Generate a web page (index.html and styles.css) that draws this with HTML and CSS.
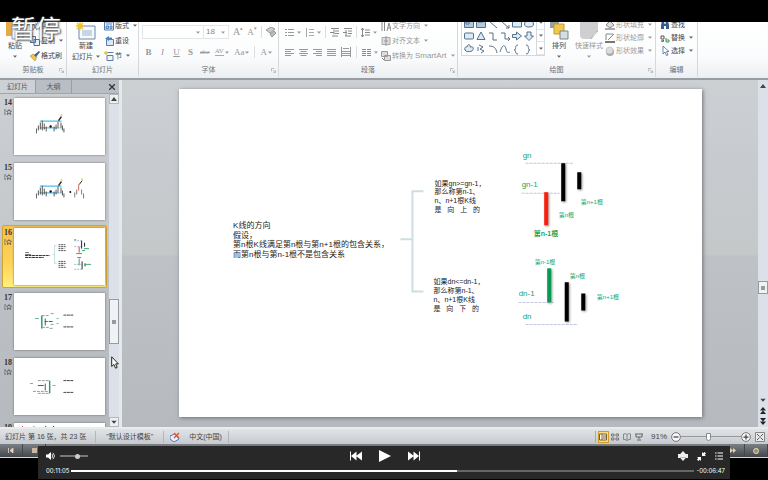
FILE: index.html
```html
<!DOCTYPE html>
<html lang="zh-CN">
<head>
<meta charset="utf-8">
<title>幻灯片</title>
<link rel="stylesheet" href="styles.css">
</head>
<body>
<svg class="sprite" aria-hidden="true">
  <symbol id="down" viewBox="0 0 4 3"><path d="M0 .5h4L2 2.8z" fill="currentColor"/></symbol>
  <symbol id="up" viewBox="0 0 6 4"><path d="M0 4h6L3 0z" fill="currentColor"/></symbol>
  <symbol id="launcher" viewBox="0 0 6 6"><path d="M.5 4V.5H4M2.5 2.5l2.5 2.5M5.5 3v2.5H3" fill="none" stroke="currentColor"/></symbol>
  <symbol id="lines" viewBox="0 0 9 9"><path d="M0 1.5h9M0 3.5h6M0 5.5h9M0 7.5h6" stroke="currentColor"/></symbol>
  <symbol id="linesC" viewBox="0 0 9 9"><path d="M0 1.5h9M1.5 3.5h6M0 5.5h9M1.5 7.5h6" stroke="currentColor"/></symbol>
  <symbol id="linesR" viewBox="0 0 9 9"><path d="M0 1.5h9M3 3.5h6M0 5.5h9M3 7.5h6" stroke="currentColor"/></symbol>
  <symbol id="linesJ" viewBox="0 0 9 9"><path d="M0 1.5h9M0 3.5h9M0 5.5h9M0 7.5h9" stroke="currentColor"/></symbol>
  <symbol id="star" viewBox="0 0 8 6"><path d="M0 1h2M0 3h1.500M0 5h2M5 .5l.8 1.500h1.700L6.200 3.500l.6 2L5 4.400l-1.800 1.100.6-2L2.500 2h1.700z" fill="none" stroke="#555" stroke-width=".8"/></symbol>
  <symbol id="candles" viewBox="0 0 34 22">
    <path d="M4 7.500h22M4 14.500h20" stroke="#4fbde6" stroke-width="1.300"/>
    <path d="M.5 15v5M2.500 12v5M4.500 9v7M6.500 7v10M8.500 10v6M10.500 13v5M18.500 13v5M20.500 11v5M22.500 8v6M25.500 9v6M27 12v5M28.500 15v4" stroke="#555"/>
    <path d="M23 7l3-4" stroke="#222" stroke-width="1.500"/><circle cx="15" cy="13" r="1.200" fill="#111"/><circle cx="26" cy="1.500" r="1" fill="#e8cf58"/>
  </symbol>
</svg>

<div class="letterbox"></div>

<header class="ribbon">
  <section class="group clipboard">
    <div class="tools">
      <button class="big"><svg width="20" height="20" viewBox="0 0 20 20"><path d="M1 0h13v16H1z" fill="#e5a94a"/><path d="M7 5h11v14H7z" fill="#f5f7fa" stroke="#8796ab"/></svg><span>粘贴</span><svg class="arrow"><use href="#down"/></svg></button>
      <div class="stack">
        <button><svg width="10" height="10" viewBox="0 0 10 10"><path d="M2 1l5 8M8 1L3 9" stroke="#5978a8"/></svg>剪切</button>
        <button><svg width="10" height="10" viewBox="0 0 10 10"><path d="M.5.500h5v6h-5zM4 3.500h5.500v6H4z" fill="#e8f0fa" stroke="#4671a8"/></svg>复制<svg class="arrow"><use href="#down"/></svg></button>
        <button><svg width="10" height="10" viewBox="0 0 10 10"><path d="M0 5l3-2 4 3-2 4z" fill="#eec64d" stroke="#a9822b" stroke-width=".5"/><path d="M4 4l5-4 1 1-4 5z" fill="#435f8e"/></svg>格式刷</button>
      </div>
    </div>
    <div class="caption">剪贴板<svg><use href="#launcher"/></svg></div>
  </section>

  <section class="group slides">
    <div class="tools">
      <button class="big"><svg width="20" height="18" viewBox="0 0 20 18"><path d="M3 4h16v13H3z" fill="#f7fafd" stroke="#7188a8"/><path d="M6 8h10v6H6z" fill="#c7d5e5"/><path d="M4 0v8M0 4h8M1 1l6 6M7 1L1 7" stroke="#f0c332" stroke-width="1.500"/></svg><span>新建</span><span>幻灯片<svg class="arrow"><use href="#down"/></svg></span></button>
      <div class="stack">
        <button><svg width="10" height="10" viewBox="0 0 10 10"><path d="M.5 1h9v8h-9z" fill="#eef4fa" stroke="#5a7da8"/><path d="M2 3h6M2 5h2.500v2.500H2zM6 5h2v2.500H6z" stroke="#5a8cc5" fill="#9fc0e4"/></svg>版式<svg class="arrow"><use href="#down"/></svg></button>
        <button><svg width="10" height="10" viewBox="0 0 10 10"><path d="M2.500 3.500h7v6h-7z" fill="#dce8f6" stroke="#5a7da8"/><path d="M5 0L1 2.500 5 5V3.500h3V1.500H5z" fill="#4c86cb"/></svg>重设</button>
        <button><svg width="10" height="10" viewBox="0 0 10 10"><path d="M3 1.500h6.500M3 4.500h6v5H3z" fill="#eef4fa" stroke="#5a7da8"/><path d="M2 0v4M0 2h4" stroke="#eec03a" stroke-width="1.500"/></svg>节<svg class="arrow"><use href="#down"/></svg></button>
      </div>
    </div>
    <div class="caption">幻灯片</div>
  </section>

  <section class="group font">
    <div class="tools rows dim">
      <div class="row">
        <label class="combo family"><select aria-label="字体"><option></option></select><svg class="arrow"><use href="#down"/></svg></label>
        <label class="combo size"><select aria-label="字号"><option>18</option></select><svg class="arrow"><use href="#down"/></svg></label>
        <button class="serif grow">A<sup>▴</sup></button><button class="serif shrink">A<sup>▾</sup></button>
        <i class="sep"></i>
        <button aria-label="清除格式"><svg width="10" height="10" viewBox="0 0 10 10"><path d="M0 3l5-3 4 2-5 4z" fill="#ccc" stroke="#999"/><path d="M4 7l4-3 2 2-4 4z" fill="#bbb" stroke="#999"/></svg></button>
      </div>
      <div class="row letters">
        <button><b>B</b></button><button><em>I</em></button><button><u>U</u></button><button><b>S</b></button><button class="strike"><s>abe</s></button>
        <button class="track"><span>AV</span><svg class="arrow"><use href="#down"/></svg></button>
        <button>Aa<svg class="arrow"><use href="#down"/></svg></button>
        <i class="sep"></i>
        <button>A<svg class="arrow"><use href="#down"/></svg></button>
      </div>
    </div>
    <div class="caption">字体<svg><use href="#launcher"/></svg></div>
  </section>

  <section class="group paragraph">
    <div class="tools dim">
      <div class="rows">
        <div class="row">
          <button aria-label="项目符号"><svg width="9" height="9" viewBox="0 0 9 9"><path d="M0 1.500h2M0 4.500h2M0 7.500h2M3 1.500h6M3 4.500h6M3 7.500h6" stroke="#999"/></svg><svg class="arrow"><use href="#down"/></svg></button>
          <button aria-label="编号"><svg width="9" height="9" viewBox="0 0 9 9"><path d="M1.500 0v9M4 1.500h5M4 4.500h5M4 7.500h5" stroke="#aaa"/></svg><svg class="arrow"><use href="#down"/></svg></button>
          <i class="sep"></i>
          <button aria-label="减少缩进"><svg width="9" height="9" viewBox="0 0 9 9"><path d="M1 .5h8M5 3h4M5 5.500h4M2 8h6M4 1.500v5M0 4.500h4" stroke="#888"/></svg></button>
          <button aria-label="增加缩进"><svg width="9" height="9" viewBox="0 0 9 9"><path d="M1 .5h8M5 3h4M5 5.500h4M2 8h6M3 2v6M0 4.500h4" stroke="#888"/></svg></button>
          <i class="sep"></i>
          <button aria-label="行距"><svg width="9" height="9" viewBox="0 0 9 9"><path d="M1.500 0v9M0 2l1.500-2L3 2M0 7l1.500 2L3 7M4 2h5M4 4.500h5M4 7h5" stroke="#888" fill="none"/></svg><svg class="arrow"><use href="#down"/></svg></button>
        </div>
        <div class="row aligns">
          <button aria-label="左对齐"><svg width="9" height="9"><use href="#lines"/></svg></button>
          <button aria-label="居中"><svg width="9" height="9"><use href="#linesC"/></svg></button>
          <button aria-label="右对齐"><svg width="9" height="9"><use href="#linesR"/></svg></button>
          <button aria-label="两端对齐"><svg width="9" height="9"><use href="#linesJ"/></svg></button>
          <button aria-label="分散对齐"><svg width="10" height="10" viewBox="0 0 10 10"><path d="M.5 0v10M9.500 0v10M2 1.500h6M1 4.500h8M1 6.500h8M1 8.500h8" stroke="#999"/></svg></button>
          <i class="sep"></i>
          <button aria-label="分栏"><svg width="9" height="9" viewBox="0 0 9 9"><path d="M0 1.500h4M0 3.500h4M0 5.500h4M0 7.500h4M5 1.500h4M5 3.500h4M5 5.500h4M5 7.500h4" stroke="#888"/></svg><svg class="arrow"><use href="#down"/></svg></button>
        </div>
      </div>
      <div class="stack">
        <button><svg width="10" height="10" viewBox="0 0 10 10"><path d="M1 0v10M3.500 0v10M6 10l2-8 2 8M6.500 7h3" stroke="#888" fill="none"/></svg>文字方向<svg class="arrow"><use href="#down"/></svg></button>
        <button><svg width="10" height="10" viewBox="0 0 10 10"><path d="M1 1.500h8v7H1z" fill="#ddd" stroke="#aaa"/><path d="M5 0v10M3 5h4" stroke="#999"/></svg>对齐文本<svg class="arrow"><use href="#down"/></svg></button>
        <button><svg width="10" height="10" viewBox="0 0 10 10"><path d="M.5.500h6v5h-6zM3.500 4.500h6v5h-6z" fill="#ddd" stroke="#999"/><path d="M1 7l2 2" stroke="#888"/></svg><span>转换为 <span class="latin">SmartArt</span></span><svg class="arrow"><use href="#down"/></svg></button>
      </div>
    </div>
    <div class="caption">段落<svg><use href="#launcher"/></svg></div>
  </section>

  <section class="group drawing">
    <div class="tools">
      <div class="gallery">
        <svg width="74" height="38" viewBox="0 0 74 38" fill="none" stroke="#55708c" stroke-width="1">
          <g fill="#dcebf5">
            <path d="M2.500 3.500h9v7h-9zM14.500 3.500h9v7h-9z" fill="#b3c9dd"/><path d="M4 5h3v2H4zM16 5h5" />
            <path d="M50.500 4h9v6h-9z"/><ellipse cx="67" cy="7" rx="4.500" ry="3"/>
            <rect x="2.500" y="16" width="9" height="6" rx="1"/><path d="M19 15l4 7.500h-8z"/>
            <path d="M50.500 17.500h4V15l5 4-5 4v-2.500h-4zM65 15h4v4h2.500L67 23.500 62.500 19H65z"/>
            <path d="M3 33c-1-3 1-3 2-3 0-3 4-3 3 0 4-1 4 2 2 4-3 1-6 1-7-1z"/>
          </g>
          <path d="M27 4l8 7M39 4l8 7M47 8v3h-3M27 16h4v7h4M39 16h4v6h5M46 20l2 2-2 2M17 28l4 2-3 2 4 2-3 2M16 30v4M27 29c5 0 7 2 8 7M38 35c3-9 5-7 6-3s2 4 4 3M56 28c-4 0-1 5-4 5 3 0 0 4 4 4M64 28c4 0 1 5 4 5-3 0 0 4-4 4"/>
        </svg>
        <div class="steps"><button aria-label="上一行"><svg class="arrow"><use href="#down"/></svg></button><button aria-label="下一行"><svg class="arrow"><use href="#down"/></svg></button><button aria-label="更多形状"><svg class="arrow"><use href="#down"/></svg></button></div>
      </div>
      <button class="big"><svg width="20" height="18" viewBox="0 0 20 18"><path d="M1 0h9v6H1z" fill="#999fa6"/><path d="M5 2h10v10H5z" fill="#f0c84e" stroke="#c39b32"/><path d="M11 9h8v8h-8z" fill="#d8dde2" stroke="#7b838c"/></svg><span>排列</span><svg class="arrow"><use href="#down"/></svg></button>
      <button class="big dim"><svg width="20" height="18" viewBox="0 0 20 18"><path d="M1 0h18v9l-7 8H5q-4 0-4-4z" fill="#cfcfd2"/><path d="M12 17c2-2 0-6 7-8z" fill="#ececee" stroke="#aaa" stroke-width=".6"/></svg><span>快速样式</span><svg class="arrow"><use href="#down"/></svg></button>
      <div class="stack tight dim">
        <button><svg width="10" height="10" viewBox="0 0 10 10"><path d="M1 5l4-4 4 4-4 3z" fill="#ddd" stroke="#888"/><path d="M0 9h10" stroke="#aaa" stroke-width="2"/></svg>形状填充<svg class="arrow"><use href="#down"/></svg></button>
        <button><svg width="10" height="10" viewBox="0 0 10 10"><path d="M1 1h7M1 1v6M3 7l6-6" stroke="#888" fill="none"/><path d="M0 9h10" stroke="#777" stroke-width="2"/></svg>形状轮廓<svg class="arrow"><use href="#down"/></svg></button>
        <button><svg width="10" height="10" viewBox="0 0 10 10"><circle cx="5" cy="6" r="4" fill="#aaa"/><circle cx="4.500" cy="4.500" r="3.500" fill="#ddd" stroke="#aaa" stroke-width=".5"/></svg>形状效果<svg class="arrow"><use href="#down"/></svg></button>
      </div>
    </div>
    <div class="caption">绘图<svg><use href="#launcher"/></svg></div>
  </section>

  <section class="group editing">
    <div class="tools">
      <div class="stack tight">
        <button><svg width="10" height="10" viewBox="0 0 10 10"><path d="M1 9V5l1-4h2l.5 3h1L6 1h2l1 4v4H6V6H4v3z" fill="#3a5a91"/></svg>查找</button>
        <button><svg width="10" height="10" viewBox="0 0 10 10"><path d="M1 3h3v3H1zM1 8h3l-1-1M3 8L2 9" stroke="#555" fill="none"/><path d="M6 5v4M6 7h3v2H6" stroke="#3a9b55" fill="none"/></svg>替换<svg class="arrow"><use href="#down"/></svg></button>
        <button><svg width="10" height="10" viewBox="0 0 10 10"><path d="M3 0v8l2-2 1.500 3.500L8 9 6.500 5.500H9z" fill="#fff" stroke="#4d6b98" stroke-width=".8"/></svg>选择<svg class="arrow"><use href="#down"/></svg></button>
      </div>
    </div>
    <div class="caption">编辑</div>
  </section>
</header>

<main class="workspace">
  <aside class="sidebar">
    <nav class="tabs"><button class="tab active">幻灯片</button><button class="tab">大纲</button><button class="close" aria-label="关闭"><svg width="6" height="6" viewBox="0 0 6 6"><path d="M0 0l6 6M6 0L0 6" stroke="#333" stroke-width="1.300"/></svg></button></nav>
    <div class="panel">
      <ol class="thumbs">
        <li><div class="num">14<svg><use href="#star"/></svg></div>
          <svg class="thumb" viewBox="0 0 92 58"><use href="#candles" x="22" y="16" width="34" height="22"/></svg></li>
        <li><div class="num">15<svg><use href="#star"/></svg></div>
          <svg class="thumb" viewBox="0 0 92 58"><use href="#candles" x="22" y="16" width="34" height="22"/><path d="M61.500 30v5M63.500 27v5M68.500 27v5M70.500 31v5" stroke="#777"/><path d="M65.500 22v6" stroke="#d8604c"/><path d="M66 22l3-4" stroke="#222"/><circle cx="69" cy="16.500" r="1" fill="#e8cf58"/><circle cx="57" cy="29.500" r="1" fill="#111"/></svg></li>
        <li class="selected"><div class="num">16<svg><use href="#star"/></svg></div>
          <svg class="thumb" viewBox="0 0 92 58"><path d="M11 25h4M11 27h6" stroke="#777"/><path d="M11 28h25M11 30h19" stroke="#333" stroke-dasharray="3 .5"/><path d="M43 18h-2v18h2M39 27h2" stroke="#c3dbe0" fill="none"/><path d="M45 17h7M45 19h8M45 21h6M45 23h8M45 34h7M45 36h8M45 38h6M45 40h8" stroke="#555" stroke-dasharray="2 .6"/><path d="M61 13h9M61 19h7M61 37h7M61 42h9" stroke="#a9b6d4" stroke-dasharray="2 1"/><path d="M68.500 13v8M71.500 15v4M69 34v8M72 36v3" stroke="#222"/><path d="M66 19v6" stroke="#e0402c"/><path d="M66 31v7M61 12h2M71 21h5M63 26h6M64 30h4M73 37h5M69 23h3" stroke="#35a76f"/></svg></li>
        <li><div class="num">17<svg><use href="#star"/></svg></div>
          <svg class="thumb" viewBox="0 0 92 58"><path d="M28 23v13" stroke="#2f9d68" stroke-width="1.500"/><path d="M21 26h4M37 32h3M43 26h2" stroke="#69b993"/><path d="M28 23h8M37 21h3M28 35h8M36 36h4M43 31h2" stroke="#999" stroke-dasharray="3 1"/><path d="M31.500 26v7M31 29h3M35 29h4" stroke="#555"/><path d="M50 22.500h10M50 34.500h10" stroke="#444" stroke-dasharray="3 .5"/></svg></li>
        <li><div class="num">18<svg><use href="#star"/></svg></div>
          <svg class="thumb" viewBox="0 0 92 58"><path d="M36 23v13" stroke="#2f9d68" stroke-width="1.500"/><path d="M39 28h3" stroke="#69b993"/><path d="M24 23h11M16 26h3M19 34h16M24 36h11" stroke="#999" stroke-dasharray="3 1"/><path d="M31.500 26v7M24 28h6" stroke="#555"/><path d="M50 23h10M50 35h10" stroke="#444" stroke-dasharray="3 .5"/></svg></li>
        <li><div class="num">19<svg><use href="#star"/></svg></div>
          <svg class="thumb" viewBox="0 0 92 58"><path d="M8 3l2 3M40 4l3 2" stroke="#c65b55"/><path d="M20 3v4M22 5v3" stroke="#48a97b"/><path d="M32 3v3M40 3v4" stroke="#444"/></svg></li>
      </ol>
      <div class="scroll"><button aria-label="向上"><svg width="6" height="4"><use href="#up"/></svg></button><span class="grip"></span><button aria-label="向下"><svg width="6" height="4"><use href="#down"/></svg></button></div>
    </div>
    <svg class="cursor" width="8" height="13" viewBox="0 0 8 13"><path d="M.7.800v9.700l2.200-2 1.600 3.700 1.700-.8-1.600-3.500h2.800z" fill="#fff" stroke="#222"/></svg>
  </aside>

  <section class="canvas">
    <svg class="slide" viewBox="0 0 522 327">
      <g class="bracket"><path d="M244 102h-11v100h11M221 150h12"/></g>
      <g class="body"><text x="54" y="139">K线的方向</text><text x="54" y="149">假设，</text><text x="54" y="158">第n根K线满足第n根与第n+1根的包含关系，</text><text x="54" y="168">而第n根与第n-1根不是包含关系</text></g>
      <g class="note"><text x="255" y="97">如果gn&gt;=gn-1，</text><text x="255" y="105">那么称第n-1、</text><text x="255" y="114">n、n+1根K线</text><text x="255" y="123">是&#160;&#160;&#160;向&#160;&#160;&#160;上&#160;&#160;&#160;的</text></g>
      <g class="note"><text x="254" y="195">如果dn&lt;=dn-1，</text><text x="254" y="204">那么称第n-1、</text><text x="254" y="213">n、n+1根K线</text><text x="254" y="222">是&#160;&#160;&#160;向&#160;&#160;&#160;下&#160;&#160;&#160;的</text></g>
      <path class="level" d="M346 74h47M342 104h38M339 213h36M346 235h51"/>
      <g class="bars">
        <path d="M383.500 74v38M399.500 83v17M387 193v39M403.500 204v17" stroke="#000"/>
        <path d="M366.500 103v33" stroke="#fb1f0d"/><path d="M369.500 179v34" stroke="#079a55"/>
      </g>
      <g class="level-name"><text x="343" y="69">gn</text><text x="342" y="98">gn-1</text><text x="339" y="207">dn-1</text><text x="343" y="230">dn</text></g>
      <g class="bar-name"><text x="401" y="115">第n+1根</text><text x="379" y="128">第n根</text><text x="354" y="147" class="strong">第n-1根</text><text x="355" y="175">第n-1根</text><text x="390" y="189">第n根</text><text x="417" y="210">第n+1根</text></g>
    </svg>
  </section>

  <div class="scroll page-scroll"><button aria-label="向上"><svg width="6" height="4"><use href="#up"/></svg></button><span class="grip"></span><button aria-label="向下"><svg width="6" height="4"><use href="#down"/></svg></button><button aria-label="上一张"><svg width="6" height="7" viewBox="0 0 6 7"><path d="M0 3.500L3 0l3 3.500zM0 7l3-3.500L6 7z" fill="#222"/></svg></button><button aria-label="下一张"><svg width="6" height="7" viewBox="0 0 6 7"><path d="M0 0h6L3 3.500zM0 3.500h6L3 7z" fill="#222"/></svg></button></div>
</main>

<footer class="status">
  <span class="cell">幻灯片 第 16 张，共 23 张</span>
  <span class="cell theme">"默认设计模板"</span>
  <span class="cell lang"><svg width="10" height="10" viewBox="0 0 10 10"><path d="M0 4l5-2 4 5-5 3-4-3z" fill="#e9f0fa" stroke="#5077ba"/><path d="M4 1l5 5M9 1L4 6" stroke="#e2572f" stroke-width="1.500"/></svg>中文(中国)</span>
  <div class="views">
    <button class="on" aria-label="普通视图"><svg width="8" height="8" viewBox="0 0 8 8"><path d="M.5 1h7v6h-7zM3 1v6M4 3h3M4 5h3" fill="#fff" stroke="#716034"/></svg></button>
    <button aria-label="浏览视图"><svg width="8" height="8" viewBox="0 0 8 8"><path d="M.5 1h2.500v2H.5zM5 1h2.500v2H5zM.5 5H3v2H.5zM5 5h2.500v2H5z" fill="none" stroke="#777"/></svg></button>
    <button aria-label="阅读视图"><svg width="8" height="8" viewBox="0 0 8 8"><path d="M4 1.500Q2 0 .5 1v5.500Q2 6 4 7.500 6 6 7.500 6.500V1Q6 0 4 1.500v6" fill="none" stroke="#888"/></svg></button>
    <button aria-label="放映"><svg width="8" height="8" viewBox="0 0 8 8"><path d="M0 1h8M1 1v3h6V1M4 4v2M2 7h4" fill="none" stroke="#666"/></svg></button>
  </div>
  <span class="percent">91%</span>
  <button class="round" aria-label="缩小"><svg width="10" height="10" viewBox="0 0 8 8"><circle cx="4" cy="4" r="3.500" fill="#f8f8f8" stroke="#777" stroke-width=".8"/><path d="M2 4h4" stroke="#444"/></svg></button>
  <input class="zoom" type="range" min="0" max="100" value="46" aria-label="显示比例">
  <button class="round" aria-label="放大"><svg width="10" height="10" viewBox="0 0 8 8"><circle cx="4" cy="4" r="3.500" fill="#f8f8f8" stroke="#777" stroke-width=".8"/><path d="M2 4h4M4 2v4" stroke="#444"/></svg></button>
  <button class="fit" aria-label="适应窗口"><svg width="10" height="10" viewBox="0 0 10 10"><path d="M.5.500h9v9h-9z" fill="#e8eaec" stroke="#888"/><path d="M2 2l2 2M8 2L6 4M2 8l2-2M8 8L6 6M4 5h2" stroke="#555"/></svg></button>
</footer>

<div class="under">
  <button aria-label="开头"><svg width="6" height="5" viewBox="0 0 6 5"><path d="M.5 0v5M5 0v5L2 2.500z" fill="#e3d5c3" stroke="#e3d5c3" stroke-width=".8"/></svg></button>
  <button aria-label="停止"><svg width="5" height="5"><rect width="5" height="5" fill="#c9b9a4"/></svg></button>
  <i></i>
  <button aria-label="快进"><svg width="6" height="5" viewBox="0 0 6 5"><path d="M0 0v5l3-2.500zM3 0v5l3-2.500z" fill="#e3d5a9"/></svg></button>
  <button aria-label="设置"><svg width="6" height="6" viewBox="0 0 6 6"><circle cx="3" cy="3" r="2.300" fill="none" stroke="#e3d5a9" stroke-width="1.200"/><circle cx="3" cy="3" r=".8" fill="#e3d5a9"/></svg></button>
</div>

<div class="toast">暂停</div>

<div class="player">
  <div class="controls">
    <div class="side">
      <button aria-label="音量"><svg width="9" height="8" viewBox="0 0 9 8"><path d="M0 2.500h2L5 0v8L2 5.500H0z" fill="#fff"/><path d="M6 2q1.500 2 0 4M7 .8q3 3.200 0 6.400" fill="none" stroke="#fff" stroke-width=".8"/></svg></button>
      <input class="volume" type="range" min="0" max="100" value="66" aria-label="音量大小">
    </div>
    <div class="transport">
      <button aria-label="上一个"><svg width="12" height="10" viewBox="0 0 12 10"><path d="M0 .5h1v9H0zM6.500.500v9L1 5zM12 .5v9L6 5z" fill="#fff"/></svg></button>
      <button aria-label="播放"><svg width="12" height="12" viewBox="0 0 12 12"><path d="M0 0l12 6-12 6z" fill="#fff"/></svg></button>
      <button aria-label="下一个"><svg width="12" height="10" viewBox="0 0 12 10"><path d="M11 .5h1v9h-1zM5.500.500v9L11 5zM0 .5v9L6 5z" fill="#fff"/></svg></button>
    </div>
    <div class="side end">
      <button aria-label="画面比例"><svg width="10" height="10" viewBox="0 0 10 10"><path d="M0 3h10v4H0zM5 0l3 3.200H2zM5 10l3-3.200H2z" fill="#eee"/></svg></button>
      <button aria-label="退出全屏"><svg width="9" height="9" viewBox="0 0 9 9"><path d="M5 0l1.300 1.300L7.600 0 9 1.400 7.700 2.700 9 4H5zM0 5h4v4L2.700 7.700 1.400 9 0 7.600l1.300-1.300z" fill="#fff"/></svg></button>
      <button aria-label="播放列表"><svg width="8" height="8" viewBox="0 0 8 8"><path d="M0 1h1.500M0 4h1.500M0 7h1.500M2.500 1H8M2.500 4H8M2.500 7H8" stroke="#fff" stroke-width="1.200"/></svg></button>
    </div>
  </div>
  <div class="timeline"><span>00:11:05</span><input class="seek" type="range" min="0" max="1072" value="665" aria-label="播放进度"><span>-00:06:47</span></div>
</div>
</body>
</html>
```
FILE: styles.css
```css
* { box-sizing: border-box; }

body {
  margin: 0;
  height: 100vh;
  display: flex;
  flex-direction: column;
  position: relative;
  overflow: hidden;
  background: #000;
  color: #444;
  font: 7px/10px "Liberation Sans", "Noto Sans CJK SC", sans-serif;
}

button {
  border: 0;
  padding: 0;
  background: none;
  color: inherit;
  font: inherit;
  display: flex;
  align-items: center;
  justify-content: center;
  white-space: nowrap;
}

input {
  appearance: none;
  margin: 0;
  background: none;
}

svg { display: block; flex: none; }
.sprite { position: absolute; width: 0; height: 0; }
.arrow { width: 4px; height: 3px; margin-left: 3px; color: #666; }
.letterbox { flex: none; height: 22px; }

/* Ribbon */
.ribbon {
  flex: none;
  display: flex;
  height: 58px;
  padding-bottom: 1px;
  background: linear-gradient(#fff, #fbfcfd 60%, #eceff2);
  border-bottom: 2px solid #989da3;
}
.group {
  display: flex;
  flex-direction: column;
  border-right: 1px solid #d5d8dc;
}
.tools {
  height: 42px;
  display: flex;
  align-items: flex-end;
  overflow: hidden;
}
.caption {
  position: relative;
  text-align: center;
  line-height: 14px;
  color: #6c7178;
}
.caption svg { position: absolute; right: 2px; top: 5px; width: 5px; height: 5px; color: #aaafb5; }
.stack button { height: 15px; gap: 1px; justify-content: flex-start; }
.tight { padding-bottom: 6px; }
.tight button { height: 13px; }
.big { flex-direction: column; line-height: 11px; padding-bottom: 1px; }
.big > .arrow { margin: 4px 0 4px; }
.big span { display: flex; align-items: center; }
.dim, .dim .arrow { color: #999; }
.rows { display: flex; flex-direction: column; justify-content: flex-end; align-items: flex-start; padding-bottom: 1px; }
.row { display: flex; align-items: center; height: 20px; }
.sep { width: 1px; height: 12px; background: #ddd; }

.clipboard { width: 67px; }
.clipboard .tools { gap: 5px; padding-left: 5px; }
.slides { width: 72px; }
.slides .tools { gap: 4px; padding-left: 5px; }
.font { width: 140px; }
.font .tools.rows { align-items: flex-start; padding-left: 3px; }
.font .row { gap: 4px; }
.combo {
  display: flex;
  align-items: center;
  height: 14px;
  padding-right: 3px;
  border: 1px solid #e3e5e7;
  background: #fff;
}
.combo select {
  appearance: none;
  flex: 1;
  min-width: 0;
  border: 0;
  padding: 0 0 0 2px;
  background: none;
  color: #888;
  font: 8px/12px "Liberation Sans", sans-serif;
}
.family { width: 62px; }
.size { width: 26px; margin-left: -5px; }
.letters button, .serif { font: 9px/12px "Liberation Serif", serif; }
.grow { font-size: 10px; }
sup { font-size: 5px; line-height: 5px; align-self: flex-start; }
.font .letters { gap: 5px; padding-left: 2px; }
.letters button { min-width: 9px; }
.letters .strike, .letters .track { font-size: 7px; }
.track span { border-bottom: 1px solid #aaa; line-height: 7px; }
.letters .arrow { margin-left: 1px; }

.paragraph { width: 179px; }
.paragraph .tools { padding-left: 6px; }
.paragraph .rows { width: 96px; }
.paragraph .row { gap: 4px; }
.paragraph .aligns { gap: 5px; }
.latin { font-size: 8px; }

.drawing { width: 198px; }
.drawing .tools { padding-left: 3px; }
.gallery { display: flex; border: 1px solid #d4d9de; margin-bottom: 7px; background: #fff; }
.steps { width: 8px; display: flex; flex-direction: column; border-left: 1px solid #d4d9de; }
.steps button { flex: 1; border-bottom: 1px solid #e3e5e7; }
.steps .arrow { margin: 0; }
.drawing .big { width: 28px; }
.drawing .big.dim { width: 32px; }
.editing { width: 42px; }
.editing .tools { padding-left: 4px; }

/* Workspace */
.workspace {
  flex: 1;
  min-height: 0;
  display: flex;
  background: linear-gradient(#cdd0d3, #c7cbcf 25%, #c4c8c9 50%, #bec2c7 51%, #b6babe);
  border-bottom: 2px solid #e9ebed;
}
.sidebar {
  position: relative;
  width: 122px;
  display: flex;
  flex-direction: column;
  border-right: 3px solid #e6e9ec;
  flex: none;
}
.tabs { display: flex; height: 14px; background: #b9bec5; border-bottom: 1px solid #a0a5ab; }
.tab { width: 36px; border-right: 1px solid #989ea6; color: #555; }
.active { background: #cdd0d4; }
.close { margin-left: auto; margin-right: 4px; }
.panel { flex: 1; min-height: 0; display: flex; }
.thumbs {
  flex: 1;
  margin: 0;
  padding: 1px 2px 0;
  list-style: none;
  overflow: hidden;
}
.thumbs li {
  display: flex;
  gap: 1px;
  height: 63px;
  margin-bottom: 2px;
  padding: 2px 1px;
  border: 1px solid transparent;
  border-radius: 2px;
}
.thumbs .selected {
  border-color: #d3a32d;
  background: linear-gradient(#f2c34e, #ffd257 60%, #fff07c);
}
.num {
  width: 9px;
  font: bold 8px/10px "Liberation Serif", serif;
  color: #333;
}
.num svg { width: 8px; height: 6px; margin-top: 1px; }
.thumb {
  flex: 1;
  min-width: 0;
  height: 57px;
  background: #fff;
  box-shadow: 0 0 2px #666;
}
.scroll {
  width: 10px;
  display: flex;
  flex-direction: column;
  background: #dce1e9;
  color: #444;
}
.scroll button { height: 10px; background: #eceff2; border: 1px solid #b3b8bf; }
.grip {
  height: 45px;
  border: 1px solid #959ba3;
  background: linear-gradient(#999, #999) center / 4px 4px no-repeat #f0f2f5;
}
.panel .grip { margin: 195px 0 auto; }
.cursor { position: absolute; left: 111px; top: 276px; }
.canvas { flex: 1; min-width: 0; padding: 9px 56px 10px 57px; }
.slide { width: 100%; background: #fff; box-shadow: 1px 1px 4px #6c7074; }
.page-scroll { width: 10px; }
.page-scroll button { background: none; border: 0; height: 11px; }
.page-scroll .grip { height: 13px; margin: 190px 0 auto; }

/* Slide content */
.slide text { fill: #222; }
.body { font-size: 8px; }
.note { font-size: 7px; }
.bracket path { fill: none; stroke: #cddee3; stroke-width: 2; }
.level { stroke: #c1c6df; stroke-dasharray: 3 1; }
.bars path { stroke-width: 4; filter: drop-shadow(1px 1px 1px #999); }
.slide .level-name text { fill: #22a564; font-size: 8px; }
.slide .bar-name text { fill: #22a564; font-size: 6px; }
.slide .bar-name .strong { font-size: 7px; font-weight: bold; }

/* Status bar */
.status {
  flex: none;
  display: flex;
  align-items: center;
  height: 15px;
  padding: 0 3px 0 5px;
  background: linear-gradient(#e1e4e7, #c6cacf);
  color: #444;
}
.cell { display: flex; align-items: center; height: 12px; padding-right: 9px; border-right: 1px solid #b3b7bb; }
.theme { padding: 0 10px; }
.lang { gap: 9px; padding: 0 6px; }
.views { display: flex; gap: 1px; margin-left: auto; padding-left: 2px; border-left: 1px solid #aaa; }
.views button { width: 11px; height: 12px; }
.views .on { background: #ffdc78; border: 1px solid #d29b27; }
.percent { margin: 0 4px 0 6px; font-size: 8px; }
.zoom { width: 60px; height: 10px; }
.zoom::-webkit-slider-runnable-track { height: 8px; background: linear-gradient(#999, #999) center / 100% 1px no-repeat; }
.zoom::-webkit-slider-thumb { appearance: none; width: 5px; height: 8px; border: 1px solid #888; border-radius: 0 0 3px 3px; background: #fff; }
.fit { margin-left: 4px; }

.under {
  flex: none;
  display: flex;
  height: 14px;
  margin-bottom: 22px;
  background: linear-gradient(#7b8085, #44484c);
  border-bottom: 1px solid #d8d8d8;
}
.under button { width: 23px; border-right: 1px solid #44484c; }
.under i { flex: 1; }

.toast {
  position: absolute;
  left: 11px;
  top: 14px;
  color: #fff;
  font-size: 25px;
  line-height: 30px;
  text-shadow: 1px 1px 2px #444, 0 0 2px #666;
}

/* Video player overlay */
.player {
  position: absolute;
  left: 38px;
  right: 38px;
  bottom: 1px;
  height: 33px;
  padding: 1px 5px 0 8px;
  background: #282828;
  color: #fff;
}
.controls { display: flex; align-items: center; height: 18px; }
.side { flex: 1; display: flex; align-items: center; gap: 5px; }
.end { justify-content: flex-end; gap: 9px; padding-right: 2px; }
.transport { display: flex; gap: 17px; }
.volume { width: 28px; height: 6px; }
.volume::-webkit-slider-runnable-track { height: 5px; background: linear-gradient(#777, #777) center / 100% 2px no-repeat; }
.volume::-webkit-slider-thumb { appearance: none; width: 5px; height: 5px; border-radius: 50%; background: #ccc; }
.timeline { display: flex; align-items: center; gap: 2px; height: 11px; font: 6px/8px Inter, sans-serif; }
.seek { flex: 1; min-width: 0; height: 2px; background: linear-gradient(90deg, #fff 62%, #666 62%); }
.seek::-webkit-slider-thumb { appearance: none; width: 1px; height: 2px; }
```
